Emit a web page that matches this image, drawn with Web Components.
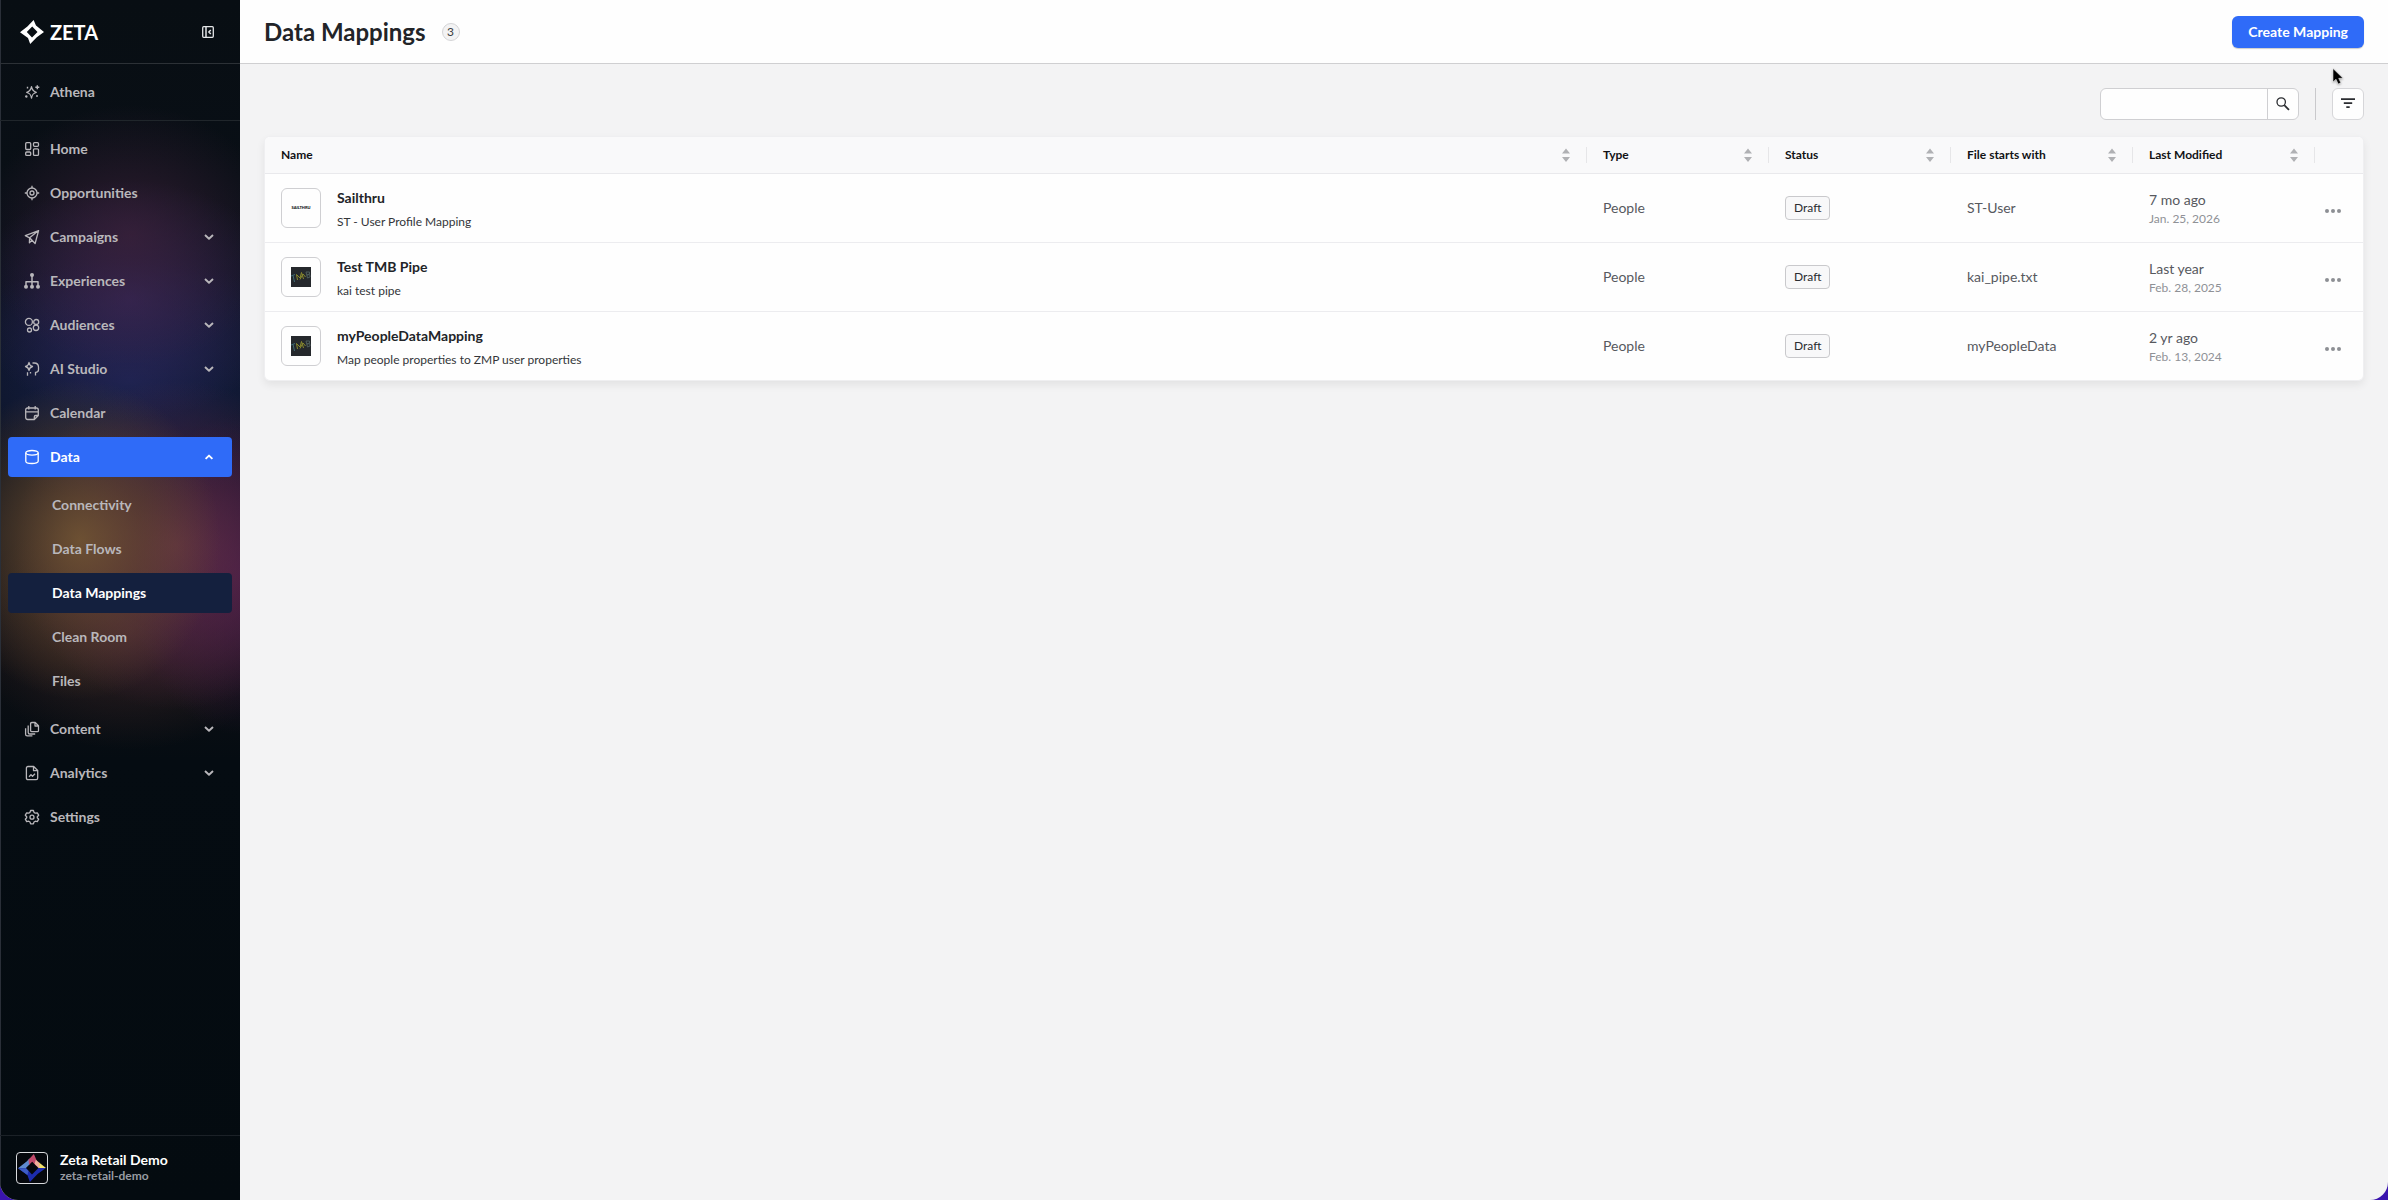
<!DOCTYPE html>
<html lang="en">
<head>
<meta charset="utf-8">
<title>Data Mappings</title>
<style>
  html, body { margin: 0; background: #3a14ae; }
  body { font-family: Lato, "Liberation Sans", sans-serif; font-size: 14px; line-height: 20px; color: #222428; }
</style>
</head>
<body>
<app-shell>
  <side-bar slot="side">
    <nav-item slot="assistant" icon="sparkle">Athena</nav-item>
    <nav-item icon="home">Home</nav-item>
    <nav-item icon="target">Opportunities</nav-item>
    <nav-item icon="send" menu>Campaigns</nav-item>
    <nav-item icon="tree" menu>Experiences</nav-item>
    <nav-item icon="circles" menu>Audiences</nav-item>
    <nav-item icon="ai" menu>AI Studio</nav-item>
    <nav-item icon="calendar">Calendar</nav-item>
    <nav-item icon="database" menu open>Data
      <nav-sub slot="children">Connectivity</nav-sub>
      <nav-sub slot="children">Data Flows</nav-sub>
      <nav-sub slot="children" current>Data Mappings</nav-sub>
      <nav-sub slot="children">Clean Room</nav-sub>
      <nav-sub slot="children">Files</nav-sub>
    </nav-item>
    <nav-item icon="copies" menu>Content</nav-item>
    <nav-item icon="report" menu>Analytics</nav-item>
    <nav-item icon="gear">Settings</nav-item>
    <account-card slot="account" name="Zeta Retail Demo" handle="zeta-retail-demo"></account-card>
  </side-bar>
  <page-header slot="header" count="3">Data Mappings
    <primary-button slot="actions">Create Mapping</primary-button>
  </page-header>
  <table-toolbar></table-toolbar>
  <mapping-table></mapping-table>
</app-shell>
<mouse-pointer></mouse-pointer>

<script>
const define = (name, html, setup) => {
  const tpl = document.createElement('template');
  tpl.innerHTML = html;
  customElements.define(name, class extends HTMLElement {
    connectedCallback() {
      if (this.shadowRoot) return;
      const root = this.attachShadow({ mode: 'open' });
      const content = tpl.content.cloneNode(true);
      if (setup) setup(content, this);
      root.append(content);
    }
  });
};

const icons = {
  sparkle: '<path d="M7.500 2.600c.6 3.600 1.600 4.700 4.800 5.700-3.200 1-4.200 2.100-4.800 5.900-.6-3.800-1.600-4.900-4.800-5.900 3.200-1 4.200-2.100 4.800-5.700z"/><path d="M13.300 1.200v4M11.300 3.200h4M3.500 2.800v1.800M13 11v2" stroke-width="1.400"/><circle cx="2.300" cy="12.400" r=".6"/>',
  home: '<rect x="1.700" y="1.700" width="5" height="6.800" rx="1"/><rect x="9.500" y="1.700" width="5" height="3.600" rx="1"/><rect x="1.700" y="11" width="5" height="3.400" rx="1"/><rect x="9.500" y="7.800" width="5" height="6.600" rx="1"/>',
  target: '<circle cx="8" cy="8" r="5"/><circle cx="8" cy="8" r="2"/><path d="M8 .8V3M8 13v2.200M.8 8H3M13 8h2.200"/>',
  send: '<path d="M14.600 1.600 1.300 6.600l4.300 2.200 5.500 5.700zM5.600 8.800l9-7.200M5.600 8.800l-.2 5 2.600-2.500"/>',
  tree: '<g fill="currentColor" stroke="none"><circle cx="8" cy="2" r="2"/><circle cx="2" cy="13.700" r="2"/><circle cx="8" cy="13.700" r="2"/><circle cx="14" cy="13.700" r="2"/></g><path d="M8 3v9M2 12V8.700h12V12" stroke-width="1.500"/>',
  circles: '<circle cx="4.900" cy="4.900" r="3.500"/><circle cx="12.200" cy="5" r="2.500"/><circle cx="12" cy="10.800" r="2.700"/><circle cx="5.500" cy="13" r="2"/>',
  ai: '<path d="M5 1.500c.4 2.600 1.200 3.400 3.500 4-2.300.6-3.100 1.400-3.500 4-.4-2.600-1.200-3.400-3.500-4 2.300-.6 3.100-1.400 3.500-4z"/><path d="M8.500 2h1.700c2.600 0 4.300 1.700 4.300 4.200v2.600c0 1.600-1 2.500-3 2.500v3.200M3.500 11.300v3.400M6.500 11v1.500"/>',
  calendar: '<path d="M1.700 5c0-1.300.8-2 2-2h8.600c1.200 0 2 .7 2 2v5.500l-4 4H3.700c-1.200 0-2-.7-2-2zM1.700 6.800h12.600M4.800 1v3.600M11.200 1v3.600M10.300 14.500v-2.600c0-.9.5-1.400 1.400-1.400h2.600"/>',
  database: '<path d="M1.800 3.800v8.400c0 1.300 2.700 2.300 6.200 2.300s6.200-1 6.200-2.300V3.800"/><ellipse cx="8" cy="3.800" rx="6.200" ry="2.300"/>',
  copies: '<path d="M7.800 1.500h3.400l3.300 3.300v4.600c0 .8-.4 1.200-1.200 1.200H7.800c-.8 0-1.200-.4-1.200-1.200V2.700c0-.8.4-1.200 1.200-1.200zM11 1.700v3.300h3.300M4.200 4.600v6.800c0 1 .6 1.600 1.600 1.600h5.400M1.600 7.200v6c0 1 .6 1.600 1.600 1.600h5.200"/>',
  report: '<path d="M4 1.500h5.700l4 4v7.500c0 1-.5 1.600-1.500 1.600H4c-1 0-1.600-.6-1.600-1.600V3.100c0-1 .6-1.600 1.600-1.600zM9.500 1.700v4h4M5 11.800l2-2 1.500 1.500 2.500-2.500"/>',
  gear: '<path d="M6.600 1.500h2.800l.6 1.900 1.300.8 2-.4 1.400 2.400-1.400 1.500v1l1.400 1.500-1.400 2.400-2-.4-1.300.8-.6 1.900H6.600L6 13l-1.300-.8-2 .4-1.400-2.400 1.400-1.500v-1L1.300 6.200l1.400-2.400 2 .4L6 3.400z"/><circle cx="8" cy="8.200" r="2"/>',
  down: '<path d="M5 6 9 9.800 13 6" stroke-width="1.900"/>',
  up: '<path d="M5.600 9.900 9 6.600l3.400 3.300" stroke-width="1.900"/>',
  collapse: '<rect x="2.700" y="2.700" width="10.600" height="10.600" rx="1"/><path d="M6 3v10M10.800 6 8.800 8l2 2" stroke-width="1.500"/>',
  search: '<circle cx="6.200" cy="6" r="4.200"/><path d="m9.300 9.200 4.700 4.700" stroke-width="1.800"/>',
  filter: '<path d="M1 3.200h14M3.800 7.200h8.400M6.300 11.200h3.400" stroke-width="1.800"/>',
  more: '<g fill="currentColor" stroke="none"><circle cx="2" cy="8" r="2"/><circle cx="8" cy="8" r="2"/><circle cx="14" cy="8" r="2"/></g>'
};

define('app-icon', `<style>
  :host { display: block; width: 16px; height: 16px; flex: none; }
  svg { display: block; width: 16px; height: 16px; fill: none; stroke: currentColor; stroke-width: 1.300; stroke-linejoin: round; overflow: visible; }
</style><svg viewBox="0 0 16 16" aria-hidden="true"></svg>`,
(root, el) => { root.querySelector('svg').innerHTML = icons[el.getAttribute('name')] || ''; });

define('zeta-mark', `<style>
  :host { display: block; width: 24px; height: 24px; flex: none; }
  svg { display: block; width: 100%; height: 100%; }
  .tint { display: none; }
  :host([colorful]) .tint { display: block; }
  :host([colorful]) .plain { display: none; }
</style><svg viewBox="0 0 24 24" aria-hidden="true">
  <path class="plain" fill="#fff" fill-rule="evenodd" d="M13.600 0 16 5.600 24 12l-7.200 5.200L10.200 24 8 18 0 12.300 7.400 6.400zM12.200 6.600 6.800 12l5.200 5.600 5.500-5.600z"/>
  <g class="tint">
    <path fill="#5f8bd0" d="M0 12.300 7.400 6.400 10 3.600v5.200L6.800 12z"/>
    <path fill="#c04a6c" d="M9 5 13.600 0 16 5.600l1 2.800-1 2-3.800-3.800L9.500 9.300z"/>
    <path fill="#f0b09a" d="m15.300 5 3 2.400.8 4.600h-1.600l-3.300-3.600z"/>
    <path fill="#f4e36a" d="m18 7.200 6 4.800h-5.500z"/>
    <path fill="#1c2cae" d="m0 12.300 6.800-.3 5.200 5.600 5.500-5.600H24l-7.200 5.200L10.200 24 8 18z"/>
    <path fill="#3d5cc4" d="M0 12.300h6.800L9 14.500 8 18z"/>
  </g>
</svg>`);

define('app-shell', `<style>
  :host { display: flex; min-height: 100vh; border-radius: 0 0 18px 18px; overflow: hidden; background: #f3f3f4; }
  .side { display: flex; flex: 0 0 240px; }
  .page { display: flex; flex-direction: column; flex: 1; min-width: 0; }
  main { display: flex; flex-direction: column; gap: 16px; padding: 24px; }
</style>
<div class="side"><slot name="side"></slot></div>
<div class="page"><slot name="header"></slot><main><slot></slot></main></div>`);

define('side-bar', `<style>
  :host { display: flex; flex-direction: column; flex: 1; box-sizing: border-box; color: #b9b7bb;
    background:
      linear-gradient(90deg, #2a2f38 0 1px, transparent 1px),
      radial-gradient(140px 160px at 80px 540px, #7a5c34d0, #6a4c3090 45%, transparent),
      radial-gradient(160px 165px at 175px 545px, #74384cb0, #5a284880 50%, transparent),
      radial-gradient(110px 160px at 240px 575px, #561c5aa0, transparent),
      radial-gradient(160px 120px at 130px 630px, #4a2c2ca0, transparent),
      radial-gradient(150px 130px at 130px 235px, #40223cb0, transparent),
      radial-gradient(160px 120px at 130px 300px, #36285ed0, transparent),
      radial-gradient(210px 120px at 130px 380px, #1c265ac0, transparent),
      linear-gradient(#080e13, #090f16 180px, #0b1220 400px, #0d0f13 660px, #050c12 760px, #040b10); }
  header { display: flex; align-items: center; gap: 6px; height: 63px; padding: 0 24px 0 20px; border-bottom: 1px solid #2c3136; }
  .brand { display: flex; align-items: center; gap: 6px; flex: 1; color: #fff; font-size: 20px; line-height: 24px; font-weight: 700; text-decoration: none; }
  button { display: flex; padding: 0; border: 0; background: none; color: #e4e6e8; }
  .assistant { padding: 8px; border-bottom: 1px solid #20262b; }
  nav { display: flex; flex-direction: column; gap: 4px; padding: 8px; flex: 1; }
  footer { padding: 16px; border-top: 1px solid #1b2127; }
</style>
<header><a class="brand" href="#"><zeta-mark></zeta-mark>ZETA</a><button aria-label="Collapse sidebar"><app-icon name="collapse"></app-icon></button></header>
<div class="assistant"><slot name="assistant"></slot></div>
<nav><slot></slot></nav>
<footer><slot name="account"></slot></footer>`);

define('nav-item', `<style>
  :host { display: block; font-size: 14px; line-height: 20px; font-weight: 700; }
  a { display: flex; align-items: center; gap: 10px; height: 40px; padding: 0 16px; border-radius: 4px; color: inherit; text-decoration: none; }
  .label { flex: 1; }
  .children { display: none; }
  :host([open]) a { background: #2f6bf8; color: #fff; }
  :host([open]) .children { display: flex; flex-direction: column; gap: 4px; padding: 8px 0 4px; }
</style><a href="#"><app-icon class="lead"></app-icon><span class="label"><slot></slot></span></a><div class="children"><slot name="children"></slot></div>`,
(root, el) => {
  root.querySelector('.lead').setAttribute('name', el.getAttribute('icon'));
  if (el.hasAttribute('menu')) {
    const arrow = document.createElement('app-icon');
    arrow.setAttribute('name', el.hasAttribute('open') ? 'up' : 'down');
    root.querySelector('a').append(arrow);
  }
});

define('nav-sub', `<style>
  :host { display: block; }
  a { display: flex; align-items: center; height: 40px; padding: 0 16px 0 44px; border-radius: 4px; color: inherit; text-decoration: none; }
  :host([current]) a { background: #14203e; color: #fff; }
</style><a href="#"><slot></slot></a>`);

define('account-card', `<style>
  :host { display: flex; align-items: center; gap: 12px; }
  .logo { display: flex; align-items: center; justify-content: center; width: 30px; height: 30px; border: 1px solid #d8dadd; border-radius: 4px; background: #05080d; }
  zeta-mark { width: 28px; height: 30px; }
  .name { color: #fff; font-size: 14px; line-height: 16px; font-weight: 700; }
  .handle { color: #979ba2; font-size: 12px; line-height: 16px; font-weight: 700; }
</style><div class="logo"><zeta-mark colorful></zeta-mark></div><div><div class="name"></div><div class="handle"></div></div>`,
(root, el) => {
  root.querySelector('.name').textContent = el.getAttribute('name');
  root.querySelector('.handle').textContent = el.getAttribute('handle');
});

define('page-header', `<style>
  :host { display: flex; align-items: center; height: 63px; padding: 0 24px; background: #fefefe; border-bottom: 1px solid #cfcfd1; }
  h1 { margin: 0; font-size: 24px; line-height: 32px; font-weight: 700; color: #222428; }
  .count { box-sizing: border-box; width: 18px; height: 18px; margin: 0 auto 0 16px; border: 1px solid #d4d4d6; border-radius: 9px; background: #f3f3f4; font-size: 12px; line-height: 16px; text-align: center; color: #3c3e42; }
</style><h1><slot></slot></h1><span class="count"></span><slot name="actions"></slot>`,
(root, el) => { root.querySelector('.count').textContent = el.getAttribute('count'); });

define('primary-button', `<style>
  :host { display: block; }
  button { height: 32px; padding: 0 16px; border: 0; border-radius: 6px; background: #2f6bf8; color: #fff; font: 700 14px/20px Lato, "Liberation Sans", sans-serif; box-shadow: 0 1px 1px #0003; }
</style><button><slot></slot></button>`);

define('table-toolbar', `<style>
  :host { display: flex; justify-content: flex-end; align-items: stretch; gap: 16px; height: 32px; }
  form { display: flex; box-sizing: border-box; width: 199px; border: 1px solid #cfcfd2; border-radius: 6px; background: #fefefe; overflow: hidden; }
  input { flex: 1; min-width: 0; padding: 0 12px; border: 0; outline: 0; background: none; font: 14px/20px Lato, sans-serif; }
  button { display: flex; align-items: center; justify-content: center; padding: 0; color: #2b2d31; background: none; }
  form button { width: 31px; border: 0; border-left: 1px solid #cfcfd2; }
  .rule { width: 1px; background: #c9c9cc; }
  .filter { width: 32px; border: 1px solid #d6d6d9; border-radius: 6px; background: #fefefe; }
</style>
<form role="search"><input type="text" aria-label="Search mappings"><button type="button" aria-label="Search"><app-icon name="search"></app-icon></button></form>
<div class="rule"></div>
<button class="filter" aria-label="Filter"><app-icon name="filter"></app-icon></button>`);

define('sort-button', `<style>
  :host { display: block; }
  button { display: block; padding: 0; border: 0; background: none; }
  svg { display: block; width: 8px; height: 14px; fill: #b0b1b4; }
</style><button aria-label="Sort"><svg viewBox="0 0 8 14"><path d="M4 .5 8 5.500H0zM0 9h8l-4 5z"/></svg></button>`);

define('mapping-logo', `<style>
  :host { display: flex; align-items: center; justify-content: center; box-sizing: border-box; width: 40px; height: 40px; flex: none; border: 1px solid #cfcfd2; border-radius: 6px; background: #fefefe; }
  .tmb { display: none; width: 20px; height: 20px; }
  .sail { font-size: 4px; line-height: 8px; font-weight: 900; color: #111; }
  :host([kind="tmb"]) .tmb { display: block; }
  :host([kind="tmb"]) .sail { display: none; }
</style><span class="sail">SAILTHRU</span>
<svg class="tmb" viewBox="0 0 20 20" aria-hidden="true"><path fill="#25282c" d="M0 0h20v20H0z"/><g fill="none" stroke-width="1"><path stroke="#3f6a74" d="m0 9 4-1.500M2 8.300 3.500 15"/><path stroke="#8a8a2c" d="m6.500 13-1-5.500L9 11l1.500-5.500L12.500 12M9 12.500 12 7l2.500 3"/><path stroke="#4d5d5c" d="m15 5 1.500 6 2.500-1-.3-2.500-2.700.5 2.500-1V5z"/></g></svg>`);

define('entity-cell', `<style>
  :host { display: flex; align-items: center; gap: 16px; }
  .text { padding-top: 4px; }
  .name { display: block; color: #222428; font-size: 14px; line-height: 24px; font-weight: 700; text-decoration: none; }
  .note { color: #333539; font-size: 12px; line-height: 24px; }
</style><mapping-logo></mapping-logo><div class="text"><a class="name" href="#"></a><div class="note"></div></div>`,
(root, el) => {
  root.querySelector('mapping-logo').setAttribute('kind', el.getAttribute('kind'));
  root.querySelector('.name').textContent = el.getAttribute('name');
  root.querySelector('.note').textContent = el.getAttribute('note');
});

define('status-tag', `<style>
  :host { display: inline-block; box-sizing: border-box; height: 24px; padding: 0 8px; border: 1px solid #c9c9cc; border-radius: 4px; background: #f8f8f9; color: #2b2d31; font-size: 12px; line-height: 22px; vertical-align: middle; }
</style><slot></slot>`);

define('date-cell', `<style>
  :host { display: block; padding-top: 2px; }
  .ago { font-size: 14px; line-height: 20px; color: #57595e; }
  .date { font-size: 12px; line-height: 18px; color: #8f9196; }
</style><div class="ago"></div><div class="date"></div>`,
(root, el) => {
  root.querySelector('.ago').textContent = el.getAttribute('ago');
  root.querySelector('.date').textContent = el.getAttribute('date');
});

const rows = [
  ['sailthru', 'Sailthru', 'ST - User Profile Mapping', 'People', 'Draft', 'ST-User', '7 mo ago', 'Jan. 25, 2026'],
  ['tmb', 'Test TMB Pipe', 'kai test pipe', 'People', 'Draft', 'kai_pipe.txt', 'Last year', 'Feb. 28, 2025'],
  ['tmb', 'myPeopleDataMapping', 'Map people properties to ZMP user properties', 'People', 'Draft', 'myPeopleData', '2 yr ago', 'Feb. 13, 2024']
];

define('mapping-table', `<style>
  :host { display: block; border: 1px solid #efeff1; border-radius: 6px; box-shadow: 0 4px 8px #00000012; overflow: hidden; }
  table { width: 100%; table-layout: fixed; border-collapse: separate; border-spacing: 0; background: #fefefe; }
  .data { width: 182px; }
  .menu { width: 48px; }
  th { padding: 0; height: 36px; background: #f9f9fa; border-bottom: 1px solid #e9e9ec; text-align: left; font-size: 12px; line-height: 16px; font-weight: 700; color: #111215; }
  .head { display: flex; align-items: center; justify-content: space-between; height: 16px; padding: 0 16px; border-right: 1px solid #e6e6e8; }
  td { height: 68px; padding: 0 16px; border-bottom: 1px solid #ececef; color: #57595e; vertical-align: middle; }
  tr:last-child td { border-bottom: 0; }
  td:last-child { padding: 0 10px; }
  td button { display: block; padding: 6px 0 0; border: 0; background: none; color: #8d8f94; }
</style>
<table>
  <colgroup><col><col class="data"><col class="data"><col class="data"><col class="data"><col class="menu"></colgroup>
  <thead><tr></tr></thead><tbody></tbody>
</table>`,
root => {
  root.querySelector('thead tr').innerHTML =
    ['Name', 'Type', 'Status', 'File starts with', 'Last Modified']
      .map(t => `<th scope="col"><div class="head">${t}<sort-button></sort-button></div></th>`).join('') + '<th></th>';
  root.querySelector('tbody').innerHTML = rows.map(([kind, name, note, type, status, file, ago, date]) => `<tr>
    <td><entity-cell kind="${kind}" name="${name}" note="${note}"></entity-cell></td>
    <td>${type}</td><td><status-tag>${status}</status-tag></td><td>${file}</td>
    <td><date-cell ago="${ago}" date="${date}"></date-cell></td>
    <td><button aria-label="Actions for ${name}"><app-icon name="more"></app-icon></button></td></tr>`).join('');
});

define('mouse-pointer', `<style>
  :host { position: absolute; top: 68px; right: 43px; width: 13px; height: 18px; pointer-events: none; }
  svg { display: block; width: 100%; height: 100%; filter: drop-shadow(0 1px 1px #0005); }
</style><svg viewBox="0 0 13 18" aria-hidden="true"><path d="M1 .5v13.500l3-2.800 2.200 4.800 2.600-1.200-2.100-4.500h4.300z" fill="#000" stroke="#fff" stroke-width=".5"/></svg>`);
</script>
</body>
</html>
